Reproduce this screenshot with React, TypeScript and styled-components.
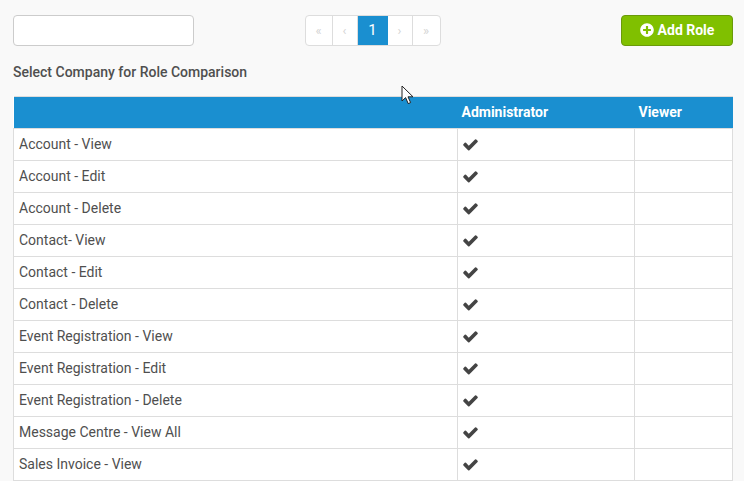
import React from 'react';
import styled, { createGlobalStyle } from 'styled-components';
import { FaPlusCircle } from 'react-icons/fa';

const rows = [
	'Account - View',
	'Account - Edit',
	'Account - Delete',
	'Contact- View',
	'Contact - Edit',
	'Contact - Delete',
	'Event Registration - View',
	'Event Registration - Edit',
	'Event Registration - Delete',
	'Message Centre - View All',
	'Sales Invoice - View',
];

const pages = [
	{ label: '«', width: 27 },
	{ label: '‹', width: 25 },
	{ label: '1', width: 30, active: true },
	{ label: '›', width: 25 },
	{ label: '»', width: 27 },
];

const CheckIcon = () => (
	<CheckSvg viewBox="0 0 1792 1792">
		<path d="M1671 566q0 40-28 68l-724 724-136 136q-28 28-68 28t-68-28l-136-136-362-362q-28-28-28-68t28-68l136-136q28-28 68-28t68 28l294 295 656-657q28-28 68-28t68 28l136 136q28 28 28 68z" fill="currentColor" />
	</CheckSvg>
);

export default function App() {
	return (
		<Page>
			<GlobalStyle />
			<TopBar>
				<SearchInput type="text" />
				<Pagination>
					{pages.map((p, i) => (
						<PageItem key={i} $width={p.width} $active={p.active}>{p.label}</PageItem>
					))}
				</Pagination>
				<AddButton>
					<FaPlusCircle size={14} />
					Add Role
				</AddButton>
			</TopBar>
			<SectionLabel>Select Company for Role Comparison</SectionLabel>
			<RolesTable>
				<colgroup>
					<col width={444} />
					<col width={177} />
					<col />
				</colgroup>
				<thead>
					<tr>
						<HeadCell></HeadCell>
						<HeadCell>Administrator</HeadCell>
						<HeadCell>Viewer</HeadCell>
					</tr>
				</thead>
				<tbody>
					{rows.map(row => (
						<tr key={row}>
							<Cell>{row}</Cell>
							<Cell><CheckIcon /></Cell>
							<Cell></Cell>
						</tr>
					))}
				</tbody>
			</RolesTable>
			<Cursor viewBox="0 0 14 21" width="14" height="21">
				<path d="M1 1 L1 16 L4.6 12.6 L7.2 18.6 L9.6 17.6 L7 11.8 L12 11.8 Z" fill="#fff" stroke="#222" strokeWidth="1" />
			</Cursor>
		</Page>
	);
}

const GlobalStyle = createGlobalStyle`
	html, body {
		margin: 0;
		padding: 0;
		background: #f9f9f9;
	}
	body {
		font-family: Roboto, "Liberation Sans", sans-serif;
		font-size: 14px;
		color: #4f4f4f;
		overflow: hidden;
	}
`

const Page = styled.div`
	position: relative;
	width: 744px;
	height: 481px;
	overflow: hidden;
	box-sizing: border-box;
	padding: 15px 11px 0 13px;
`

const TopBar = styled.div`
	display: flex;
	justify-content: space-between;
	align-items: flex-start;
	height: 31px;
`

const SearchInput = styled.input`
	box-sizing: border-box;
	width: 181px;
	height: 31px;
	margin: 0;
	padding: 0 8px;
	background: #fff;
	border: 1px solid #ccc;
	border-radius: 4px;
	outline: none;
`

const Pagination = styled.div`
	display: flex;
	box-sizing: border-box;
	height: 31px;
	margin-left: -70px;
	background: #fff;
	border: 1px solid #ddd;
	border-radius: 4px;
	overflow: hidden;
`

const PageItem = styled.span<{ $width: number; $active?: boolean }>`
	display: flex;
	align-items: center;
	justify-content: center;
	box-sizing: border-box;
	width: ${props => props.$width}px;
	padding-bottom: ${props => props.$active ? '1px' : '0'};
	font-size: ${props => props.$active ? '15px' : '13px'};
	color: ${props => props.$active ? '#fff' : '#d4d4d4'};
	background: ${props => props.$active ? '#1a8fd0' : 'transparent'};
	border-right: ${props => props.$active ? 'none' : '1px solid #ddd'};
	margin-top: ${props => props.$active ? '-1px' : '0'};
	margin-bottom: ${props => props.$active ? '-1px' : '0'};

	&:last-child {
		border-right: none;
	}
`

const AddButton = styled.button`
	display: flex;
	align-items: center;
	justify-content: center;
	gap: 4px;
	box-sizing: border-box;
	width: 112px;
	height: 31px;
	margin: 0;
	padding: 0 0 2px;
	background: #80c000;
	border: 1px solid #6a9a0a;
	border-radius: 4px;
	color: #fff;
	font-family: inherit;
	font-size: 14px;
	font-weight: 700;
`

const SectionLabel = styled.div`
	margin-top: 18px;
	height: 16px;
	line-height: 17px;
	font-size: 14px;
	font-weight: 500;
	color: #4f4f4f;
`

const RolesTable = styled.table`
	width: 720px;
	margin-top: 16px;
	table-layout: fixed;
	border-collapse: collapse;
	background: #fff;
`

const HeadCell = styled.th`
	box-sizing: border-box;
	height: 32px;
	padding: 0 5px 2px;
	background: #1a8fd0;
	border: 1px solid #ddd;
	border-left: none;
	border-right: none;
	color: #fff;
	font-size: 14px;
	font-weight: 700;
	text-align: left;

	&:not(:first-child) {
		padding-left: 4px;
	}
`

const Cell = styled.td`
	box-sizing: border-box;
	height: 32px;
	padding: 0 5px 2px;
	border: 1px solid #ddd;
	font-size: 14px;
	color: #4f4f4f;
`

const CheckSvg = styled.svg`
	display: block;
	width: 17px;
	height: 17px;
	margin: 1px 0 0 -1px;
	color: #444;
`

const Cursor = styled.svg`
	position: absolute;
	left: 401px;
	top: 85px;
`
